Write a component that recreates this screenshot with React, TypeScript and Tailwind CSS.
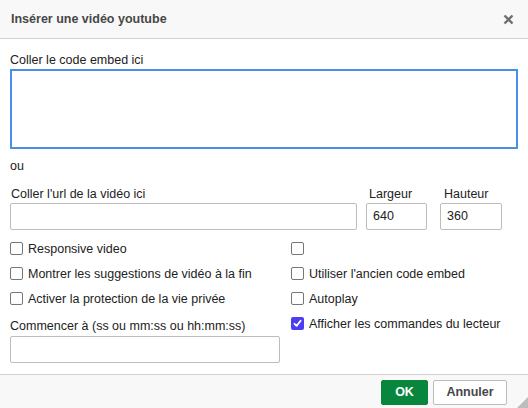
import React from "react";

const font = { fontFamily: '"Liberation Sans", Arial, sans-serif' };

const Box = ({ checked = false }: { checked?: boolean }) =>
  checked ? (
    <span className="flex h-[13px] w-[13px] shrink-0 items-center justify-center rounded-[2px] bg-[#4c3df2]">
      <svg width="9" height="9" viewBox="0 0 9 9">
        <path d="M1.5 4.8 L3.6 6.9 L7.6 1.8" fill="none" stroke="#fff" strokeWidth="1.8" strokeLinecap="round" strokeLinejoin="round" />
      </svg>
    </span>
  ) : (
    <span className="h-[13px] w-[13px] shrink-0 rounded-[2px] border border-[#767676] bg-white" />
  );

const Check = ({ label, checked }: { label?: string; checked?: boolean }) => (
  <label className="flex h-[25px] items-center gap-[5px]">
    <Box checked={checked} />
    {label && <span>{label}</span>}
  </label>
);

const Field = ({ className = "", value = "" }: { className?: string; value?: string }) => (
  <div className={`h-[27px] rounded-[2px] border border-[#bcbcbc] bg-white px-[6px] leading-[25px] ${className}`}>
    {value}
  </div>
);

export default function App() {
  return (
    <div className="relative flex h-[408px] w-[528px] flex-col bg-white text-[12.5px] text-[#222]" style={font}>
      {/* en-tête */}
      <div className="flex h-[39px] shrink-0 items-center justify-between border-b border-[#d1d1d1] bg-[#f8f8f8] pl-[11px] pr-[14px]">
        <span className="font-bold text-[#474747]">Insérer une vidéo youtube</span>
        <svg width="11" height="11" viewBox="0 0 11 11">
          <path d="M1.5 1.5 L9.5 9.5 M9.5 1.5 L1.5 9.5" stroke="#6f6f6f" strokeWidth="2.4" />
        </svg>
      </div>

      {/* contenu */}
      <div className="flex-1 px-[10px] pt-[13px] leading-[16px]">
        <div className="mb-[1px]">Coller le code embed ici</div>
        <div className="h-[80px] border-2 border-[#4a8ee8] bg-white" />

        <div className="mt-[9px]">ou</div>

        <div className="mt-[12px] flex">
          <div className="w-[347px]">
            <div className="mb-[1px] pl-[1px]">Coller l'url de la vidéo ici</div>
            <Field />
          </div>
          <div className="ml-[9px] w-[61px]">
            <div className="mb-[1px] pl-[3px]">Largeur</div>
            <Field value="640" />
          </div>
          <div className="ml-[13px] w-[62px]">
            <div className="mb-[1px] pl-[4px]">Hauteur</div>
            <Field value="360" />
          </div>
        </div>

        <div className="mt-[6px] grid grid-cols-[270px_1fr] gap-x-[11px]">
          <div>
            <Check label="Responsive video" />
            <Check label="Montrer les suggestions de vidéo à la fin" />
            <Check label="Activer la protection de la vie privée" />
            <div className="mt-[7px] mb-[2px]">Commencer à (ss ou mm:ss ou hh:mm:ss)</div>
            <Field />
          </div>
          <div>
            <Check />
            <Check label="Utiliser l'ancien code embed" />
            <Check label="Autoplay" />
            <Check label="Afficher les commandes du lecteur" checked />
          </div>
        </div>
      </div>

      {/* pied */}
      <div className="flex h-[34px] shrink-0 justify-end gap-[5px] border-t border-[#d1d1d1] bg-[#f8f8f8] pr-[21px] pt-[5px]">
        <button className="h-[25px] w-[47px] rounded-[2px] border border-[#09863e] bg-[#09863e] text-[12.5px] font-bold text-white">
          OK
        </button>
        <button className="h-[25px] w-[74px] rounded-[2px] border border-[#bcbcbc] bg-white text-[12.5px] font-bold text-[#474747]">
          Annuler
        </button>
      </div>

      <svg className="absolute bottom-0 right-0" width="11" height="11" viewBox="0 0 11 11">
        <path d="M11 0 L11 11 L0 11 Z" fill="#bdbdbd" />
      </svg>
    </div>
  );
}
